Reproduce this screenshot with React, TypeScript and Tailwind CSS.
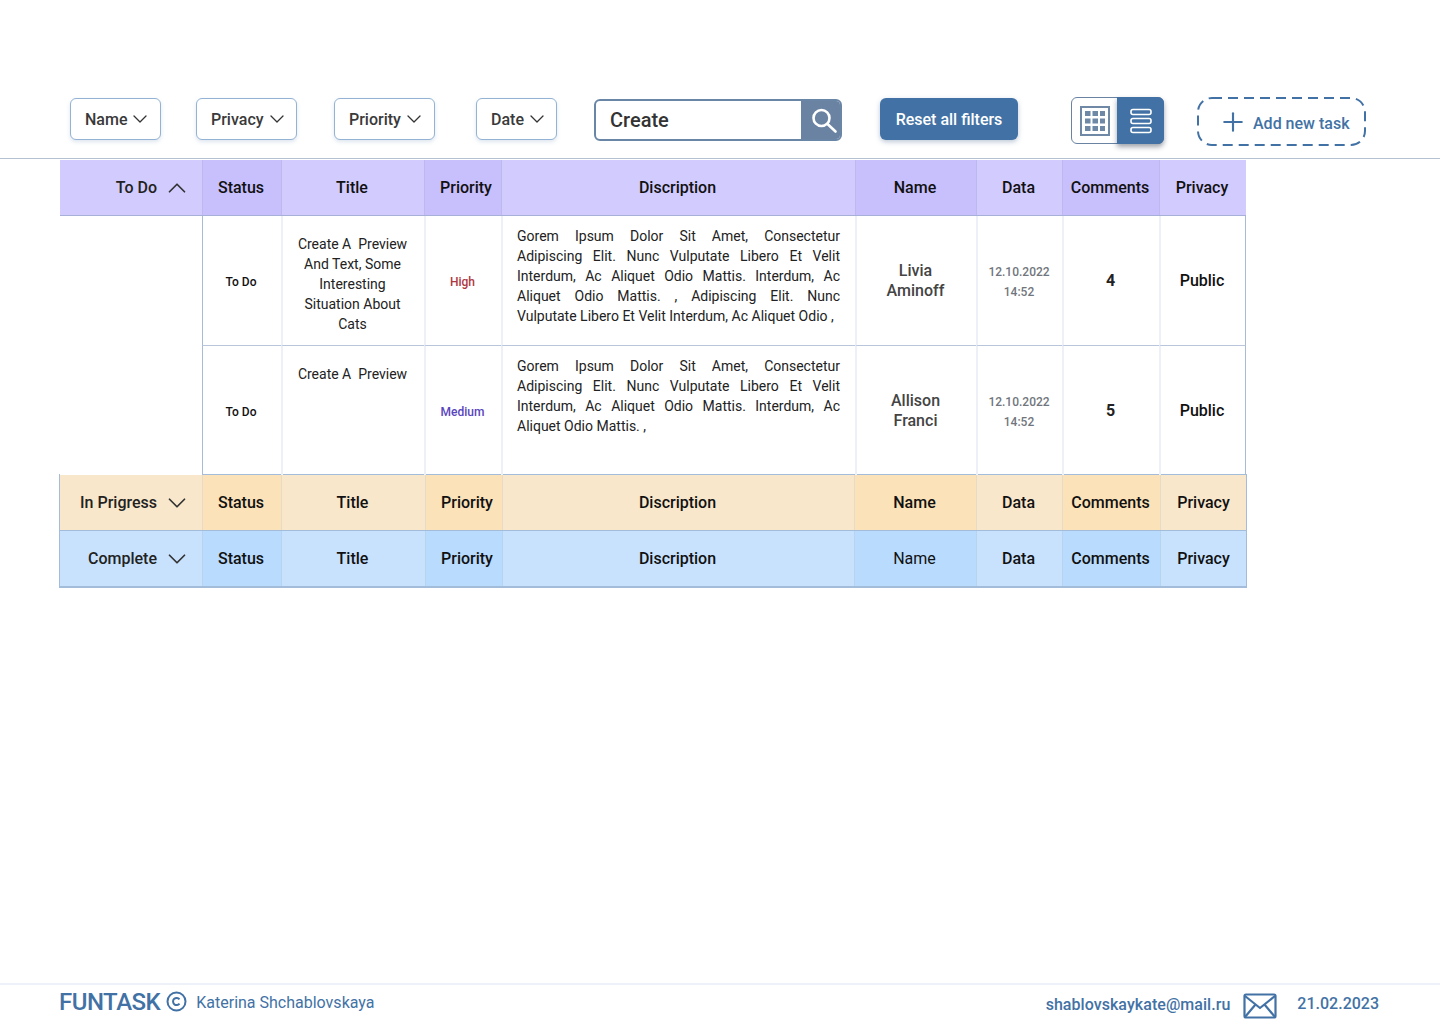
import { ChevronDown, ChevronUp, Plus } from "lucide-react";

const cols = "grid grid-cols-[142px_79px_143px_77px_354px_121px_86px_97px_87px]";
const cols2 = "grid grid-cols-[142px_79px_144px_77px_352px_122px_86px_98px_86px]";

function Filter({ label, className }: { label: string; className: string }) {
  return (
    <div className={`flex h-[42px] items-center justify-start rounded-[6px] border border-[#93b2d4] bg-white pl-[14px] shadow-[0_2px_4px_rgba(70,115,165,0.18)] text-[16px] font-medium text-[#3a3a3a] ${className}`}>
      <span className="mt-[2px]">{label}</span>
      <ChevronDown size={24} strokeWidth={1.3} className="ml-[1px] text-[#333]" />
    </div>
  );
}

function HeaderCells({ dark, sep, nameNormal, centerLast }: { dark: string; sep: string; nameNormal?: boolean; centerLast?: boolean }) {
  const c = `flex items-center justify-center border-l ${sep} text-[16px] font-medium text-[#111]`;
  return (
    <>
      <div className={`${c} ${dark} pr-[2px]`}>Status</div>
      <div className={`${c} pr-[2px]`}>Title</div>
      <div className={`${c} ${dark} pl-[8px] pr-[2px]`}>Priority</div>
      <div className={`${c} pr-[2px]`}>Discription</div>
      <div className={`${c} ${dark} pr-[2px] ${nameNormal ? "!font-normal" : ""}`}>Name</div>
      <div className={`${c} pr-[2px]`}>Data</div>
      <div className={`${c} ${dark} pr-[2px]`}>Comments</div>
      <div className={`${c} ${centerLast ? "" : "pr-[2px]"}`}>Privacy</div>
    </>
  );
}

function GroupLabel({ text, up }: { text: string; up?: boolean }) {
  const Icon = up ? ChevronUp : ChevronDown;
  return (
    <div className="flex items-center justify-end pr-[10px] text-[16px] font-medium text-[#222]">
      {text}
      <Icon size={30} strokeWidth={1.4} className="ml-[5px] text-[#333]" />
    </div>
  );
}

function Row({
  height, bottom, title, priority, priorityColor, desc, name, comments,
}: {
  height: string; bottom: string; title: string[]; priority: string; priorityColor: string; desc: string; name: string[]; comments: string;
}) {
  const cell = `border-l-2 border-[#eef0f7] ${bottom}`;
  return (
    <div className={`${cols} ${height} w-[1186px]`}>
      <div className="bg-white" />
      <div className={`flex items-center justify-center border-l border-l-[#a9bcd6] pr-[2px] pt-[2px] text-[12px] font-medium text-[#111] ${bottom}`}>To Do</div>
      <div className={`${cell} pr-[2px] pt-[18px] text-center text-[14px] leading-[20px] text-[#222]`}>
        {title.map((t) => <div key={t} className="whitespace-pre">{t}</div>)}
      </div>
      <div className={`${cell} flex items-center justify-center pr-[2px] pt-[2px] text-[12px] font-medium ${priorityColor}`}>{priority}</div>
      <div className={`${cell} pl-[14px] pr-[15px] pt-[10px] text-[14px] leading-[20px] text-[#222] [text-align:justify]`}>{desc}</div>
      <div className={`${cell} flex flex-col items-center justify-center pr-[2px] text-[16px] font-medium leading-[20px] text-[#444]`}>
        {name.map((n) => <div key={n}>{n}</div>)}
      </div>
      <div className={`${cell} flex flex-col items-center justify-center pr-[2px] pt-[2px] text-[12px] font-medium leading-[20px] text-[#71767d]`}>
        <div>12.10.2022</div>
        <div>14:52</div>
      </div>
      <div className={`${cell} flex items-center justify-center pr-[2px] text-[16px] font-bold text-[#222]`}>{comments}</div>
      <div className={`${cell} flex items-center justify-center border-r border-r-[#a9bcd6] pr-[2px] text-[16px] font-medium text-[#111]`}>Public</div>
    </div>
  );
}

export default function App() {
  return (
    <div className="flex min-h-[1024px] w-[1440px] flex-col bg-white font-['Roboto',sans-serif]">
      <div className="flex h-[159px] items-start border-b border-[#b4c1d2] pt-[97px]">
        <Filter label="Name" className="ml-[70px] mt-[1px] w-[91px]" />
        <Filter label="Privacy" className="ml-[35px] mt-[1px] w-[101px]" />
        <Filter label="Priority" className="ml-[37px] mt-[1px] w-[101px]" />
        <Filter label="Date" className="ml-[41px] mt-[1px] w-[81px]" />
        <div className="ml-[37px] mt-[2px] flex h-[42px] w-[248px] overflow-hidden rounded-[6px] border-[2px] border-[#6a86a6] bg-white">
          <div className="flex flex-1 items-center pl-[14px] text-[20px] font-medium text-[#333]">Create</div>
          <div className="flex w-[39px] items-center justify-center bg-[#6a83a3]">
            <svg className="ml-[6px]" width="28" height="28" viewBox="0 0 28 28" fill="none" stroke="white" strokeWidth="2.6" strokeLinecap="round">
              <circle cx="11.5" cy="12" r="8" />
              <path d="M17.5 18l8 7.5" />
            </svg>
          </div>
        </div>
        <div className="ml-[38px] mt-[1px] flex h-[42px] w-[138px] items-center justify-center rounded-[6px] bg-[#4272a5] pt-[2px] text-[16px] font-medium text-white shadow-[0_2px_5px_rgba(70,100,140,0.35)]">
          Reset all filters
        </div>
        <div className="ml-[53px] flex h-[47px] w-[93px] rounded-[6px] border border-[#6a83a3] bg-white">
          <div className="flex w-[45px] items-center justify-center">
            <svg width="30" height="30" viewBox="0 0 30 30">
              <rect x="1" y="1" width="28" height="28" fill="none" stroke="#6f88a6" strokeWidth="2" />
              <g fill="#6f88a6">
                <rect x="5" y="5" width="5.5" height="5" /><rect x="12.5" y="5" width="5.5" height="5" /><rect x="20" y="5" width="5" height="5" />
                <rect x="5" y="12.5" width="5.5" height="5" /><rect x="12.5" y="12.5" width="5.5" height="5" /><rect x="20" y="12.5" width="5" height="5" />
                <rect x="5" y="20" width="5.5" height="5" /><rect x="12.5" y="20" width="5.5" height="5" /><rect x="20" y="20" width="5" height="5" />
              </g>
            </svg>
          </div>
          <div className="-my-px -mr-px flex flex-1 items-center justify-center rounded-r-[6px] bg-[#4272a5] shadow-[0_3px_5px_rgba(40,50,70,0.45)]">
            <svg width="22" height="26" viewBox="0 0 22 26" fill="none" stroke="white" strokeWidth="1.6">
              <rect x="1" y="1.5" width="20" height="5" rx="2" />
              <rect x="1" y="10.5" width="20" height="5" rx="2" />
              <rect x="1" y="19.5" width="20" height="5" rx="2" />
            </svg>
          </div>
        </div>
        <div className="relative ml-[33px] flex h-[49px] w-[169px] items-center pl-[21px] text-[16px] font-medium text-[#4272a5]">
          <svg className="absolute inset-0" width="169" height="49" viewBox="0 0 169 49" fill="none" stroke="#4272a5" strokeWidth="2">
            <rect x="1" y="1" width="167" height="47" rx="14" strokeDasharray="10 6" />
          </svg>
          <Plus size={30} strokeWidth={1.7} />
          <span className="ml-[5px] mt-[4px]">Add new task</span>
        </div>
      </div>

      <div className="ml-[60px] mt-[1px] w-[1187px]">
        <div className={`${cols} h-[56px] w-[1186px] border-b border-[#a7b0d8] bg-[#d2cbfe]`}>
          <GroupLabel text="To Do" up />
          <HeaderCells dark="bg-[#c8bffd]" sep="border-[#bdb8ee]" />
        </div>
        <Row
          height="h-[130px]"
          bottom="border-b border-b-[#b9c5da]"
          title={["Create A  Preview", "And Text, Some", "Interesting", "Situation About", "Cats"]}
          priority="High"
          priorityColor="text-[#b0383f]"
          desc="Gorem Ipsum Dolor Sit Amet, Consectetur Adipiscing Elit. Nunc Vulputate Libero Et Velit Interdum, Ac Aliquet Odio Mattis. Interdum, Ac Aliquet Odio Mattis. , Adipiscing Elit. Nunc Vulputate Libero Et Velit Interdum, Ac Aliquet Odio ,"
          name={["Livia", "Aminoff"]}
          comments="4"
        />
        <Row
          height="h-[129px] -mb-px"
          bottom=""
          title={["Create A  Preview"]}
          priority="Medium"
          priorityColor="text-[#5a45bd]"
          desc="Gorem Ipsum Dolor Sit Amet, Consectetur Adipiscing Elit. Nunc Vulputate Libero Et Velit Interdum, Ac Aliquet Odio Mattis. Interdum, Ac Aliquet Odio Mattis. ,"
          name={["Allison", "Franci"]}
          comments="5"
        />
        <div className={`${cols2} -ml-px h-[57px] w-[1188px] border border-[#a3bcd9] bg-[#f9e7cb]`}>
          <GroupLabel text="In Prigress" />
          <HeaderCells dark="bg-[#fbe2b8]" sep="border-[#e8dbc6]" centerLast />
        </div>
        <div className={`${cols2} -ml-px h-[57px] w-[1188px] border-x border-b-[2px] border-x-[#a3bcd9] border-b-[#a3bcd9] bg-[#c8e2fe]`}>
          <GroupLabel text="Complete" />
          <HeaderCells dark="bg-[#b9dcfe]" sep="border-[#b6d3ef]" nameNormal centerLast />
        </div>
      </div>

      <div className="mt-auto flex h-[41px] items-start border-t-[2px] border-[#eef1f8] text-[#4272a5]">
        <span className="ml-[59px] mt-[1px] text-[24px] font-medium leading-[32px] tracking-[-0.5px]">FUNTASK</span>
        <svg className="ml-[6px] mt-[6px]" width="21" height="21" viewBox="0 0 21 21" fill="none" stroke="#4272a5" strokeWidth="2">
          <circle cx="10.5" cy="10.5" r="9" />
          <path d="M13.5 8.3a3.6 3.6 0 1 0 0 4.4" />
        </svg>
        <span className="ml-[9px] mt-[8px] text-[16px] leading-[20px]">Katerina Shchablovskaya</span>
        <span className="ml-auto mt-[10px] text-[16px] font-medium leading-[20px] tracking-[0.05px]">shablovskaykate@mail.ru</span>
        <svg className="ml-[13px] mt-[8px]" width="34" height="26" viewBox="0 0 34 26" fill="none" stroke="#4272a5" strokeWidth="2.2" strokeLinejoin="round">
          <rect x="1.5" y="1.5" width="31" height="23" rx="1.5" />
          <path d="M2 3l15 12L32 3M2 24l10.5-12.5M32 24L21.5 11.5" />
        </svg>
        <span className="ml-[20px] mr-[61px] mt-[9px] text-[16px] font-medium leading-[20px]">21.02.2023</span>
      </div>
    </div>
  );
}
